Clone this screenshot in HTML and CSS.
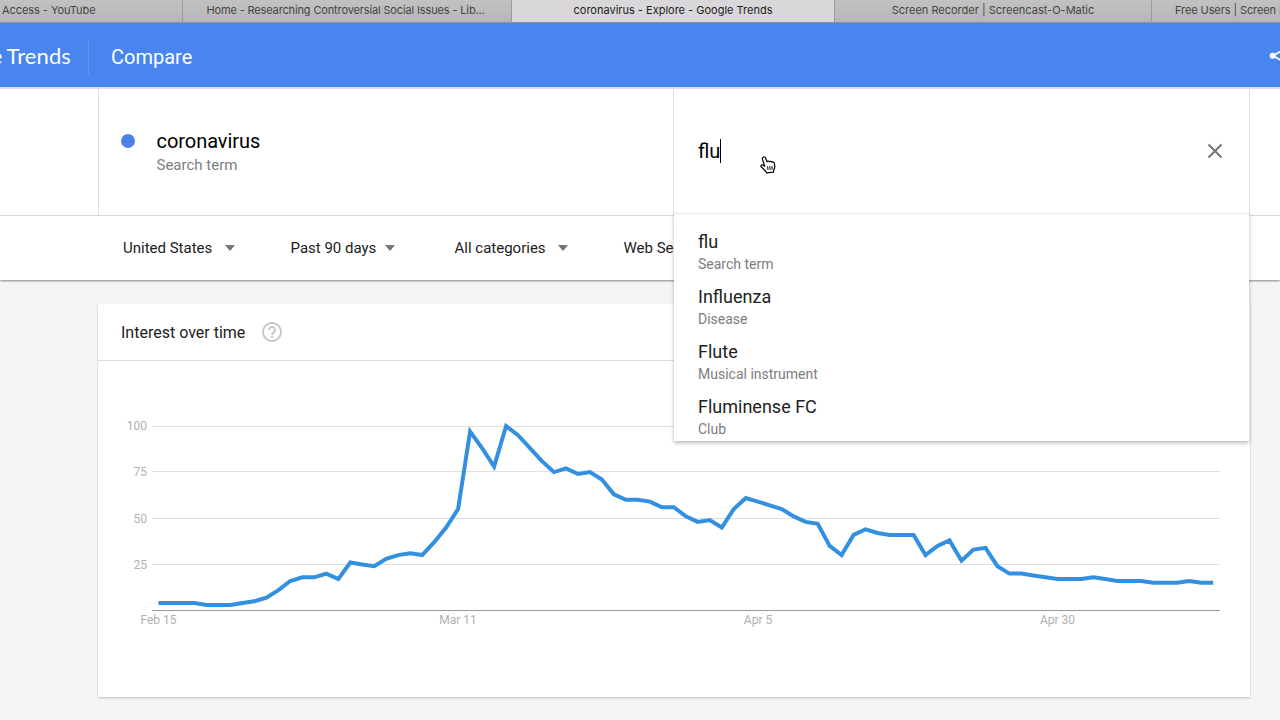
FILE: index.html
```
<!DOCTYPE html>
<html lang="en">
<head>
  <meta charset="UTF-8">
  <title>coronavirus - Explore - Google Trends</title>
  <link rel="stylesheet" href="styles.css">
</head>
<body>

<div class="tabs">
  <div class="tab tab-first">Access - YouTube</div>
  <div class="tab tab-home">Home - Researching Controversial Social Issues - Lib...</div>
  <div class="tab active">coronavirus - Explore - Google Trends</div>
  <div class="tab">Screen Recorder | Screencast-O-Matic</div>
  <div class="tab tab-last">Free Users | Screen Recorder</div>
</div>

<header class="header">
  <div class="logo"><span>Google Trends</span></div>
  <div class="title">Compare</div>
  <svg class="share" width="11" height="20" viewBox="0 0 11 20">
    <path d="M4 9.8 L16 3 M4 9.8 L16 16.6" stroke="#fff" stroke-width="1.8" fill="none"/>
    <circle cx="3.6" cy="9.8" r="3" fill="#fff"/>
  </svg>
</header>

<div class="terms">
  <div class="side"></div>
  <div class="term">
    <span class="dot"></span>
    <div>
      <div class="term-name">coronavirus</div>
      <div class="term-type">Search term</div>
    </div>
  </div>
  <div class="term term-input">
    <div class="typed">flu</div>
    <svg class="close" width="16" height="16" viewBox="0 0 16 16">
      <path d="M1.5 1.5 L14.5 14.5 M14.5 1.5 L1.5 14.5" stroke="#757575" stroke-width="2"/>
    </svg>
    <div class="menu">
      <div class="item"><div class="item-name">flu</div><div class="item-type">Search term</div></div>
      <div class="item"><div class="item-name">Influenza</div><div class="item-type">Disease</div></div>
      <div class="item"><div class="item-name">Flute</div><div class="item-type">Musical instrument</div></div>
      <div class="item"><div class="item-name">Fluminense FC</div><div class="item-type">Club</div></div>
    </div>
    <svg class="cursor" width="16" height="18" viewBox="0 0 16 18">
      <path d="M3.2 1.2 C4.2 .6 5.2 1 5.6 2 L7 5.8 C7.4 4.8 9 4.8 9.4 5.8 C10 5 11.6 5.1 11.9 6.2 C12.8 5.6 14.1 6.1 14.3 7.2 L14.8 10.4 C14.9 12 14 13.6 13.5 14.4 L13.6 16.2 L6.6 16.9 L5.8 15.2 L1.2 10.8 C.4 9.6 1.6 8.4 2.8 9 L4.7 10.2 L2.4 3 C2.1 2.2 2.5 1.5 3.2 1.2 Z" fill="#fff" stroke="#000" stroke-width="1.2" stroke-linejoin="round"/>
      <path d="M7.6 10.3 L8 14 M9.8 10.2 L10.1 13.8 M12 10 L12.1 13.6" stroke="#000" stroke-width="1"/>
    </svg>
  </div>
  <div class="side side-right"></div>
</div>

<div class="filters">
  <div class="filter f1">United States <i class="arrow"></i></div>
  <div class="filter f2">Past 90 days <i class="arrow"></i></div>
  <div class="filter f3">All categories <i class="arrow"></i></div>
  <div class="filter f4">Web Search</div>
</div>

<div class="card">
  <div class="card-head">
    <span>Interest over time</span>
    <svg class="help" width="20" height="20" viewBox="0 0 20 20">
      <circle cx="10" cy="10" r="9" fill="none" stroke="#c4c4c4" stroke-width="1.8"/>
      <path d="M7 8 A3 3 0 1 1 11.7 10.4 C10.6 11.2 10 11.6 10 13" fill="none" stroke="#c4c4c4" stroke-width="1.8"/>
      <rect x="9.1" y="14" width="1.9" height="1.9" fill="#c4c4c4"/>
    </svg>
  </div>
  <svg class="chart" width="1152" height="336" viewBox="98 361 1152 336">
    <g class="grid">
      <path d="M152 426.5H1220M152 471.5H1220M152 518.5H1220M152 564.5H1220"/>
      <path class="axis" d="M152 610.5H1220"/>
    </g>
    <g class="ylabels">
      <text x="147" y="430">100</text>
      <text x="147" y="476">75</text>
      <text x="147" y="523">50</text>
      <text x="147" y="569">25</text>
    </g>
    <g class="xlabels">
      <text x="158.500" y="624">Feb 15</text>
      <text x="458" y="624">Mar 11</text>
      <text x="758" y="624">Apr 5</text>
      <text x="1057.500" y="624">Apr 30</text>
    </g>
    <polyline id="line" class="line"/>
  </svg>
</div>

<script>
  // one value per day, starting Feb 15
  const values = [
    4, 4, 4, 4, 3, 3, 3, 4, 5, 7, 11, 16, 18, 18, 20, 17, 26, 25, 24, 28,
    30, 31, 30, 37, 45, 55, 97, 88, 78, 100, 95, 88, 81, 75, 77, 74, 75, 71, 63, 60,
    60, 59, 56, 56, 51, 48, 49, 45, 55, 61, 59, 57, 55, 51, 48, 47, 35, 30, 41, 44,
    42, 41, 41, 41, 30, 35, 38, 27, 33, 34, 24, 20, 20, 19, 18, 17, 17, 17, 18, 17,
    16, 16, 16, 15, 15, 15, 16, 15, 15
  ];
  const points = values.map((v, i) => (158.5 + i * 11.985).toFixed(1) + ',' + (610.5 - v * 1.845).toFixed(1));
  document.getElementById('line').setAttribute('points', points.join(' '));
</script>

</body>
</html>
```
FILE: styles.css
```
* {
  box-sizing: border-box;
}
body {
  margin: 0;
  width: 1280px;
  height: 720px;
  overflow: hidden;
  background: #f5f5f5;
  font-family: Roboto, sans-serif;
  color: #212121;
}
.tabs {
  display: grid;
  grid-template-columns: 183px 329px 323px 317px 1fr;
  height: 23px;
  border-bottom: 1px solid #8c8f9b;
  background: linear-gradient(#c3c1c2, #b7b7b7);
  font-family: Inter, sans-serif;
  font-size: 11px;
  line-height: 21px;
  color: #444;
}
.tab {
  overflow: hidden;
  border-right: 1px solid #9c9c9c;
  text-align: center;
  white-space: nowrap;
}
.tab.active {
  background: #d9d7da;
  color: #222;
}
.tab-first {
  padding-left: 2px;
  letter-spacing: -0.06px;
  text-align: left;
}
.tab-home {
  padding-right: 3px;
  letter-spacing: -0.14px;
}
.tab-last {
  padding-left: 23px;
  border-right: none;
  letter-spacing: -0.1px;
  text-align: left;
}
.header {
  display: flex;
  align-items: center;
  height: 64px;
  padding-top: 4px;
  background: #4885ef;
  color: #fff;
}
.logo {
  display: flex;
  justify-content: flex-end;
  width: 89px;
  height: 36px;
  padding-right: 17px;
  overflow: hidden;
  border-right: 1px solid #5d94f2;
  font-family: Lato, sans-serif;
  font-size: 22px;
  line-height: 33px;
  word-spacing: -1px;
  letter-spacing: 0.1px;
  white-space: nowrap;
}
.title {
  flex: 1;
  padding-left: 22px;
  font-size: 20px;
}
.share {
  margin-bottom: 3px;
}
.terms {
  display: grid;
  grid-template-columns: 98px 575px 576px 1fr;
  height: 129px;
  border-top: 2px solid #d5dfef;
  border-bottom: 1px solid #dedede;
  background: #fff;
}
.term {
  display: flex;
  border-left: 1px solid #dedede;
  padding: 40px 0 0 22px;
}
.side-right {
  border-left: 1px solid #dedede;
}
.dot {
  width: 14px;
  height: 14px;
  margin: 5px 21.500px 0 0;
  border-radius: 50%;
  background: #4a84e8;
}
.term-name {
  font-size: 20px;
  line-height: 24px;
  letter-spacing: -0.05px;
  color: #000;
}
.term-type {
  font-size: 15px;
  line-height: 24px;
  color: #7d7d7d;
}
.term-input {
  position: relative;
  justify-content: space-between;
  align-items: flex-start;
  padding: 50px 26px 0 24px;
}
.typed {
  height: 24px;
  border-right: 1px solid #000;
  font-size: 20px;
  line-height: 24px;
  color: #000;
}
.close {
  margin-top: 4px;
}
.menu {
  position: absolute;
  top: 124px;
  left: 0;
  width: 575px;
  height: 228px;
  padding-top: 16px;
  border-top: 2px solid #f3f3f3;
  background: #fff;
  box-shadow: 0 2px 4px rgba(0, 0, 0, 0.28);
  z-index: 2;
}
.item {
  height: 55px;
  padding-left: 24px;
}
.item-name {
  font-size: 18px;
  line-height: 22px;
}
.item-type {
  font-size: 14px;
  line-height: 23px;
  color: #7d7d7d;
}
/* hand pointer over the input */
.cursor {
  position: absolute;
  top: 67px;
  left: 86px;
}
.filters {
  display: flex;
  align-items: center;
  height: 64px;
  padding-left: 123px;
  background: #fff;
  box-shadow: 0 1px 2px rgba(0, 0, 0, 0.45);
  font-size: 15px;
}
.filter {
  display: flex;
  align-items: center;
  justify-content: space-between;
  white-space: nowrap;
}
.f1 {
  width: 112px;
  margin-right: 55.500px;
}
.f2 {
  width: 104px;
  margin-right: 60px;
}
.f3 {
  width: 113px;
  margin-right: 56px;
}
.f4 {
  width: 112px;
}
.arrow {
  border: 5px solid transparent;
  border-top: 6px solid #757575;
  border-bottom: none;
}
.card {
  width: 1152px;
  height: 393px;
  margin: 24px 0 0 98px;
  background: #fff;
  box-shadow: 0 1px 2px rgba(0, 0, 0, 0.22);
}
.card-head {
  display: flex;
  align-items: center;
  height: 57px;
  padding-left: 23px;
  border-bottom: 1px solid #dedede;
  font-size: 16px;
}
.help {
  margin-left: 16.500px;
}
.chart {
  display: block;
}
.grid path {
  stroke: #e0e0e0;
}
.grid .axis {
  stroke: #9a9a9a;
}
.ylabels text,
.xlabels text {
  font-size: 12px;
  fill: #b0b0b0;
}
.ylabels text {
  text-anchor: end;
}
.xlabels text {
  text-anchor: middle;
}
.line {
  fill: none;
  stroke: #3390e0;
  stroke-width: 4;
}
```
